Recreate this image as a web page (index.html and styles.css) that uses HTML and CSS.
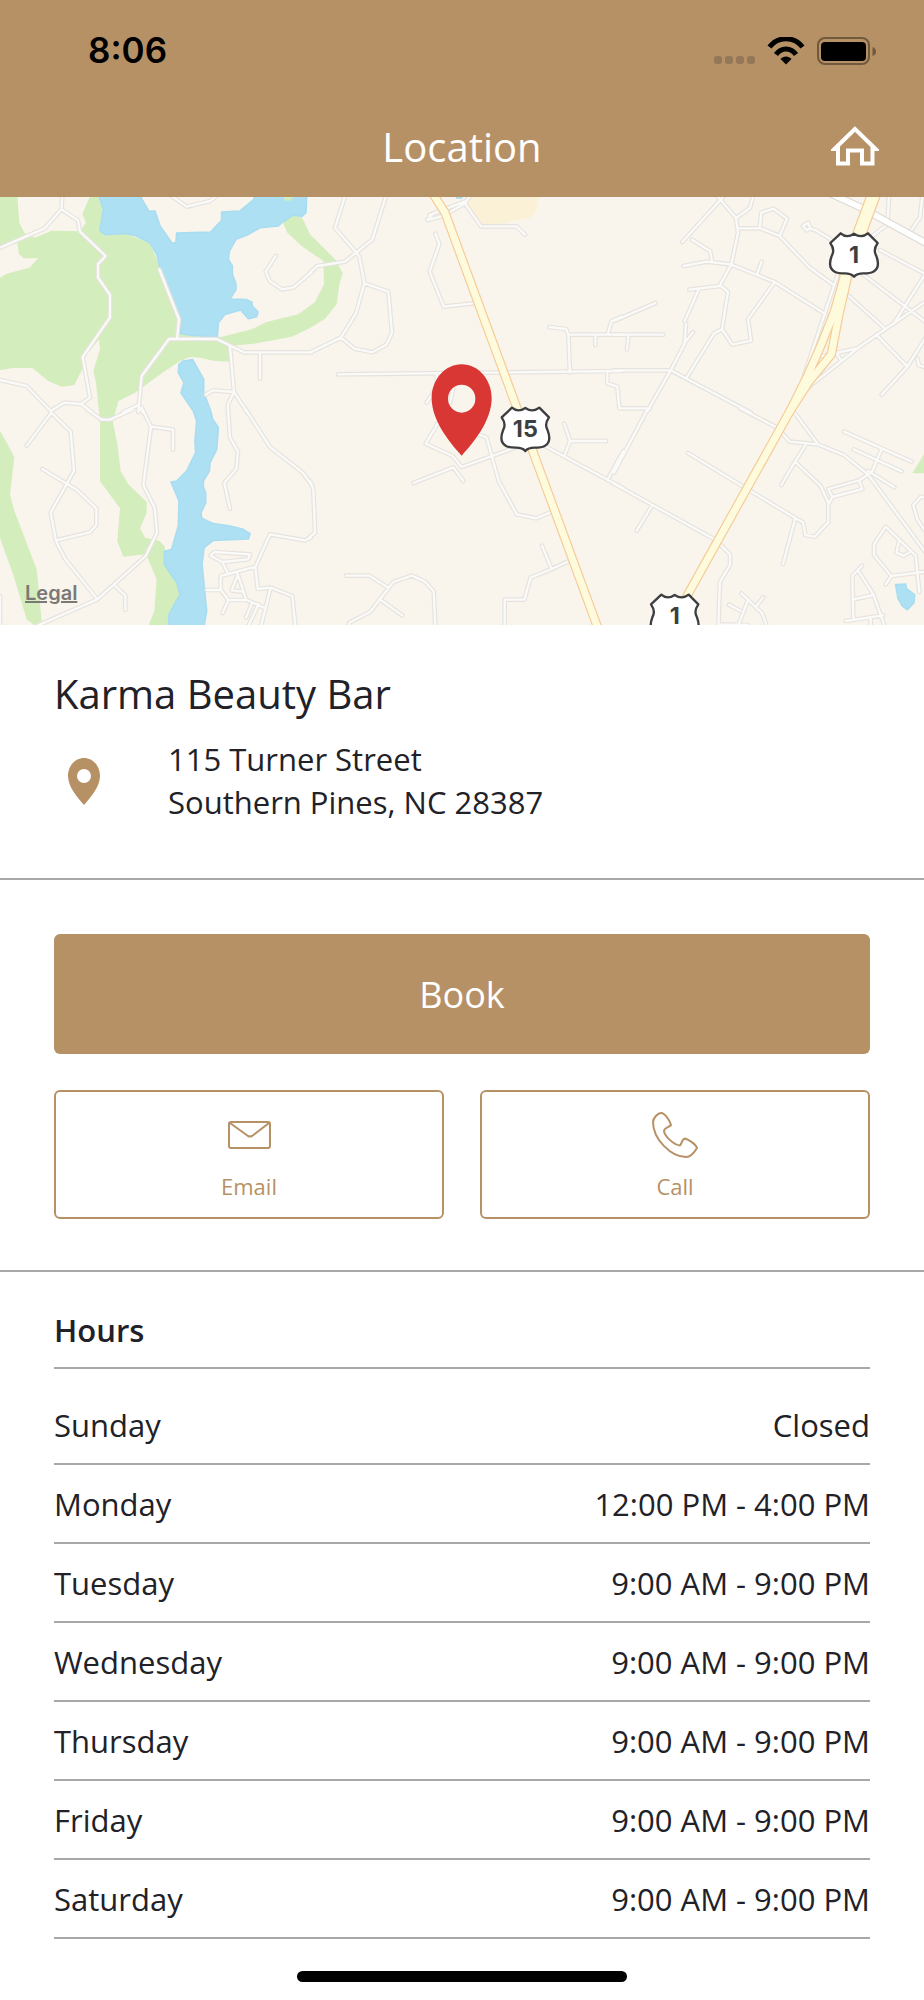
FILE: index.html
```html
<!DOCTYPE html>
<html lang="en">
<head>
<meta charset="utf-8">
<meta name="viewport" content="width=device-width, initial-scale=1">
<title>Location</title>
<link rel="stylesheet" href="styles.css">
</head>
<body>
<header class="top">
  <div class="status">
    <span class="clock">8:06</span>
    <svg class="status-icons" viewBox="0 0 162 28" role="img" aria-label="Wi-Fi on, battery full">
      <g fill="#937756"><rect x="0" y="19" width="8" height="8" rx="3"/><rect x="11" y="19" width="8" height="8" rx="3"/><rect x="22" y="19" width="8" height="8" rx="3"/><rect x="33" y="19" width="8" height="8" rx="3"/></g>
      <g fill="none" stroke="#000" stroke-width="5"><path d="M55.500 10C64 -1 80 -1 88.500 10"/><path d="M62 17.500C67 10 77 10 82 17.500"/></g>
      <path d="M66.500 22C69 18.500 75 18.500 77.500 22L72 27.500Z"/>
      <rect x="104" y="1" width="51" height="26" rx="7" fill="none" stroke="#71593d" stroke-width="2"/>
      <rect x="107" y="5" width="45" height="19" rx="4"/>
      <path d="M158.500 10Q162 11 162 14.500T158.500 19Z" fill="#71593d"/>
    </svg>
  </div>
  <div class="nav">
    <h1>Location</h1>
    <a class="home" href="#" aria-label="Home">
      <svg viewBox="0 0 48 40"><path d="M24 3L3.500 23H7V37.500H17V24.500H31V37.500H41.500V23H44.500Z" fill="none" stroke="#fff" stroke-width="4"/></svg>
    </a>
  </div>
</header>
<main>
<section class="map" aria-label="Map">
  <svg viewBox="0 3 2772 1284" preserveAspectRatio="xMidYMid slice">
    <defs>
      <g id="roads">
        <g>
          <path d="M187 0L184 40 134 97 0 155M184 40L234 73 240 107 317 180 294 204V244L330 297V364L248 483 270 605 243 624 192 620 152 645 80 570 0 552M243 624L275 648M478 220L537 370 531 428M415 648L425 540 507 429H650L732 469H935M690 452L702 588 684 625V650M702 588L638 583 618 596M702 588L742 650M780 472V548M827 180L797 227 810 256 846 280 881 274 935 228M515 0L560 32 630 15 650 0M370 648L413 628 430 650"/>
        </g>
        <g transform="translate(0 645)">
          <path d="M80 104L154 5 212 62 222 180 152 305 168 390 195 443 292 565M127 174L230 236 289 292V342L270 364 168 388M262 -5L305 26H330L398 -5M425 -10L453 47 519 56V116M453 47L430 222 464 290 471 365 437 435 292 565 110 645M345 524L376 554V596M684 -5L690 80 714 122 709 174 673 215 690 293M735 -8L810 108 908 185 935 222M932 380L915 388 810 370 766 467 662 495V536L685 567 668 606M766 467L773 534 812 530 877 555 886 645M632 434L643 423 750 430 744 445 667 453ZM667 453L685 490M712 486L738 565M712 495L695 538 727 542M685 567H740L797 592M620 537H660M812 530L783 645M757 575L738 620M775 580L745 645M0 555V640"/>
        </g>
        <g transform="translate(930 0)">
          <path d="M105 0L75 96 138 168 148 182 163 262 138 352 93 425 0 470M228 0L187 131 138 170 105 197 22 210 0 230M163 262L235 287 246 410 229 446 187 469 133 458 93 425M352 72L400 60 465 22 480 0M365 58L355 68M359 57L465 16M465 22L513 91H620L645 116M376 113L388 144 359 227 401 332 490 322M84 535L935 525M380 535V575L350 620M430 575L420 620M718 393L768 399 775 415 780 530M775 416H940M856 416V447M893 416L904 376 935 362M892 530V562L922 572 928 637 1020 637"/>
        </g>
        <g transform="translate(930 645)">
          <path d="M0 210L10 235 15 365 0 378M385 35L347 98 428 135 455 168 620 108M310 216L430 169 460 210M500 68L530 80 566 210 620 310 678 322 722 304M705 105L940 232M763 38L780 90H888M780 90L763 135M940 120L892 207M108 494H178L235 530M118 645V635L180 603 250 513 305 494 345 512 371 541 376 645M212 567L277 613M696 404L725 474 778 450M725 474L662 500 643 566H584V645"/>
        </g>
        <g transform="translate(1842 0)">
          <path d="M330 0L205 138M310 0L366 66 372 110 352 205 318 267 342 288 324 400 355 446 411 434 402 370 482 258M418 0L408 36 366 66M372 97H440L497 120 585 213 660 268M437 97L442 50 478 38 519 68 497 120M234 131L289 166 294 197M209 210L278 197 350 205 482 258 635 355M430 232L443 197M226 281L318 270M254 280L212 376M216 384L212 443 170 523 100 645M212 440L237 409M324 400L300 412 218 545M0 375L124 321M0 416H148M43 420L39 460M0 523H170L410 650M650 130L608 104 590 98 582 80 567 90 578 103 590 96M673 230L570 540M705 300L813 398M740 230L935 378M798 162L935 235M775 120L820 85 825 0M930 320L740 450 575 580M935 232L838 385M787 416L880 512M935 425L880 512 803 596M725 458L625 480M668 472L680 492M910 488L915 508 935 514M925 0L918 65 885 112"/>
        </g>
        <g transform="translate(1842 645)">
          <path d="M102 -8L0 185M0 218L305 387 348 430V462L318 512 313 645M112 287L68 359M222 126L545 322 567 334 574 372 602 377 643 334V275L620 225 543 152 502 222M543 152L578 97M378 -8L490 50 527 92 612 100 690 132 762 190 935 425M538 0L612 100M543 325L507 459M690 62L893 152M719 115L863 181M803 115L775 180 762 190 738 207 643 234 655 258 745 234 735 210M655 258L643 280M762 180L841 229M935 258H920L898 282 910 325 930 355M815 347L780 400V432L832 495 935 482M832 495L815 520M815 347L905 434 916 543M855 392L847 424 868 434 885 425M744 464L715 495 718 625M732 478L778 550 812 645M715 566L778 552M695 630L808 613M770 622V645M382 547L445 607 458 645M345 581L380 600M448 559L427 585M402 567L372 645M313 640L400 642"/>
        </g>
      </g>
      <g id="highways">
        <path d="M1300 -5L1335 50 1795 1300"/>
        <path d="M2626 0L2532 245 2502 350 2462 450 2420 545 2370 645 2022 1270"/>
        <path d="M2542 245L2518 350 2494 475 2425 560 2370 645"/>
      </g>
      <path id="shield" d="M-40 -63Q-22 -47 0 -62Q22 -47 42 -63L71 -34Q56 -13 67 5Q80 40 58 52Q49 57 28 57Q8 57 0 67Q-8 57 -28 57Q-49 57 -58 52Q-80 40 -67 5Q-56 -13 -71 -34Z" fill="#fff" stroke="#3c3e40" stroke-width="7" stroke-linejoin="round"/>
    </defs>
    <rect y="0" width="2772" height="1290" fill="#f9f4ec"/>
    <g fill="#d3edbc">
      <path d="M0 0H52L58 82 74 112 105 125 155 104 240 106 258 80 247 55 270 0H297L310 40 300 105 375 112 450 140 480 215 540 370 545 412 655 422 690 450V497L640 494 600 485 570 483 540 495 485 532 405 590 355 615 347 645 338 675 352 745 362 825 385 865 440 918V950L420 997 435 1025 478 1035 493 1050 515 1130 545 1190 505 1290H445L463 1245 470 1150 438 1075 370 1082 352 1035 360 937 318 880 300 855V675L288 560 280 525 300 460 297 430 247 490V520L222 568 185 572 145 555 97 516H40L0 522V245L20 233 88 215 115 187H72L57 175 52 140 0 158Z"/>
      <path d="M848 78L880 57 908 68 930 115 1008 193 1028 232 1018 265 1010 325 975 368 930 396 875 422 770 442 690 450 655 425 755 400 800 378 895 355 945 318 972 265 970 195 930 167 905 150 862 110Z"/>
      <path d="M0 705L20 740 43 783 30 895 43 945 110 1120 118 1200 126 1290H105L80 1270 38 1130 12 1060 0 1025Z"/>
      <path d="M2737 832L2772 775V832Z"/>
    </g>
    <path d="M1410 0H1618L1610 40Q1600 65 1575 70L1525 75 1523 82 1445 85 1400 28Z" fill="#fbf1d7"/>
    <g fill="#aee0f4" stroke="#a8ddf1" stroke-width="5" stroke-linejoin="round">
      <path d="M297 0L310 40 300 103 315 116 375 112 405 118 450 140 470 175 480 215 540 370 542 412 575 418 652 423 655 380 675 355 722 342 745 368 770 362 774 348 757 330 755 318 740 311 690 309 708 280V265L697 235V210L685 190 688 165 708 130 740 118 780 95 835 90 848 78 880 57 905 62 918 50 920 0H762V10L720 45 665 48V73L632 108 530 111 528 140 516 142 480 90 465 45 447 46 420 0Z"/>
      <path d="M578 491L611 550V590L632 645 638 670 655 695 650 760 630 800 628 825 610 855V875L617 890V920L603 950 605 967 640 983 690 990 730 1000 750 1013 745 1029 640 1033 612 1055 606 1105 620 1245 612 1290H505L508 1253 540 1195 530 1160 493 1105V1067L515 1060 535 990 537 915 513 858 530 855 560 825 587 770 585 735 590 675 580 645 543 590 552 560 535 530 537 505 550 495Z"/>
      <path d="M2687 1166L2717 1164 2719 1177 2744 1197 2742 1220 2722 1241 2707 1230 2694 1207Z"/>
      <path d="M1370 0H1385V6H1370Z"/>
    </g>
    <path d="M848 0L856 14H870L882 0Z" fill="#d3edbc"/>
    <g fill="none" stroke-linecap="round" stroke-linejoin="round">
      <use href="#roads" stroke="#e6e3de" stroke-width="14"/>
      <use href="#roads" stroke="#fafaf9" stroke-width="7"/>
      <path d="M2490 -8L2590 38 2772 138" stroke="#dedad7" stroke-width="24"/>
      <path d="M2490 -8L2590 38 2772 138" stroke="#fff" stroke-width="17"/>
      <use href="#highways" stroke="#f5cb97" stroke-width="28"/>
      <path d="M2620 0L2535 230" stroke="#f5cb97" stroke-width="42"/>
      <use href="#highways" stroke="#fefbdc" stroke-width="21"/>
      <path d="M2620 0L2535 230" stroke="#fefbdc" stroke-width="35"/>
    </g>
    <use href="#shield" x="2562" y="175"/>
    <use href="#shield" x="1576" y="698"/>
    <use href="#shield" x="2024" y="1259"/>
    <g class="route">
      <text x="2562" y="201">1</text>
      <text x="1576" y="724">15</text>
      <text x="2024" y="1283">1</text>
    </g>
    <path fill="#d83734" fill-rule="evenodd" d="M1385 505C1335 505 1295 550 1295 607C1295 674 1349 740 1385 779C1421 740 1475 674 1475 607C1475 550 1435 505 1385 505ZM1385 566A41 42 0 0 1 1385 650A41 42 0 0 1 1385 566Z"/>
  </svg>
  <a class="legal" href="#">Legal</a>
</section>

<section class="place">
  <h2>Karma Beauty Bar</h2>
  <div class="address">
    <svg class="pin" viewBox="0 0 32 48" aria-hidden="true"><path fill="#b79166" fill-rule="evenodd" d="M16 1C7 1 0 9 0 19C0 30 10 41 16 48C22 41 32 30 32 19C32 9 25 1 16 1ZM16 12A7 7 0 0 1 16 26A7 7 0 0 1 16 12Z"/></svg>
    <address>115 Turner Street<br>Southern Pines, NC 28387</address>
  </div>
</section>

<section class="actions">
  <button class="book" type="button">Book</button>
  <div class="contact">
    <button class="outline" type="button">
      <svg viewBox="0 0 46 46" aria-hidden="true"><g fill="none" stroke="#b79166" stroke-width="2"><rect x="3" y="10" width="41" height="26" rx="2"/><path d="M4 11L22 24Q24 25 26 24L43 11"/></g></svg>
      <span>Email</span>
    </button>
    <button class="outline" type="button">
      <svg viewBox="0 0 46 46" aria-hidden="true"><path fill="none" stroke="#b79166" stroke-width="2" stroke-linejoin="round" d="M9 1C6 1 1 6 1 10C1 27 19 45 34 45C38 45 42 41 45 36C44 32 37 28 33 26.500C30 27 30 31 28 33.500C22 33 12 24 12 18.500C13 15 18 15 19 13C18 9 13 1 9 1Z"/></svg>
      <span>Call</span>
    </button>
  </div>
</section>

<section class="hours">
  <h3>Hours</h3>
  <table>
    <tbody>
      <tr><th scope="row">Sunday</th><td>Closed</td></tr>
      <tr><th scope="row">Monday</th><td>12:00 PM - 4:00 PM</td></tr>
      <tr><th scope="row">Tuesday</th><td>9:00 AM - 9:00 PM</td></tr>
      <tr><th scope="row">Wednesday</th><td>9:00 AM - 9:00 PM</td></tr>
      <tr><th scope="row">Thursday</th><td>9:00 AM - 9:00 PM</td></tr>
      <tr><th scope="row">Friday</th><td>9:00 AM - 9:00 PM</td></tr>
      <tr><th scope="row">Saturday</th><td>9:00 AM - 9:00 PM</td></tr>
    </tbody>
  </table>
</section>
</main>
<div class="indicator"></div>
</body>
</html>
```
FILE: styles.css
```css
* { box-sizing: border-box; }
body {
  margin: 0;
  background: #fff;
  color: #212127;
  font-family: "Open Sans", "Noto Sans", sans-serif;
  font-size: 31px;
  line-height: 43px;
}
h1, h2, h3 { margin: 0; font-weight: 400; }
svg { display: block; }
button { font: inherit; cursor: pointer; }

.top { background: #b79166; }
.status {
  display: flex;
  justify-content: space-between;
  align-items: center;
  height: 101px;
  padding: 0 48px 0 88px;
}
.clock {
  color: #000;
  font-family: Inter, "Liberation Sans", sans-serif;
  font-size: 35px;
  font-weight: 600;
}
.status-icons { width: 162px; height: 28px; }
.nav {
  display: grid;
  grid-template-columns: 1fr auto 1fr;
  align-items: center;
  height: 96px;
  padding: 0 45px 6px;
  color: #fff;
}
.nav h1 { grid-column: 2; font-size: 40px; }
.home { justify-self: end; }
.home svg { width: 48px; height: 40px; }

.map { position: relative; }
.map svg { width: 100%; height: 428px; }
.route {
  fill: #3c3e40;
  font-family: Inter, "Liberation Sans", sans-serif;
  font-size: 70px;
  font-weight: 700;
  text-anchor: middle;
}
.legal {
  position: absolute;
  left: 25px;
  bottom: 20px;
  color: #7b7975;
  font-family: Inter, "Liberation Sans", sans-serif;
  font-size: 20px;
  font-weight: 600;
  line-height: 24px;
}

.place { padding: 41px 54px 54px; border-bottom: 2px solid #a8a8a8; }
.place h2 { font-size: 40px; line-height: 56px; }
.address { display: flex; align-items: center; gap: 68px; padding: 16px 0 0 14px; }
.pin { width: 32px; height: 48px; }
address { font-style: normal; }

.actions {
  display: grid;
  gap: 36px;
  padding: 54px 54px 51px;
  border-bottom: 2px solid #a8a8a8;
}
.book {
  height: 120px;
  border: 0;
  border-radius: 6px;
  background: #b79166;
  color: #fff;
  font-size: 36px;
}
.contact { display: grid; grid-template-columns: 1fr 1fr; gap: 36px; }
.outline {
  display: flex;
  flex-direction: column;
  align-items: center;
  gap: 12px;
  padding: 20px 0 15px;
  border: 2px solid #b79166;
  border-radius: 6px;
  background: #fff;
  color: #b79166;
  font-size: 22px;
  line-height: 32px;
}
.outline svg { width: 46px; height: 46px; }

.hours { padding: 0 54px; }
.hours h3 {
  padding: 37px 0 15px;
  border-bottom: 2px solid #a8a8a8;
  font-size: 31px;
  font-weight: 600;
}
table { width: 100%; margin-top: 16px; border-collapse: collapse; }
th, td { height: 79px; padding: 2px 0 0; border-bottom: 2px solid #a8a8a8; font-weight: 400; }
th { text-align: left; }
td { text-align: right; }

.indicator {
  width: 330px;
  height: 11px;
  margin: 32px auto 18px;
  border-radius: 6px;
  background: #000;
}
```
